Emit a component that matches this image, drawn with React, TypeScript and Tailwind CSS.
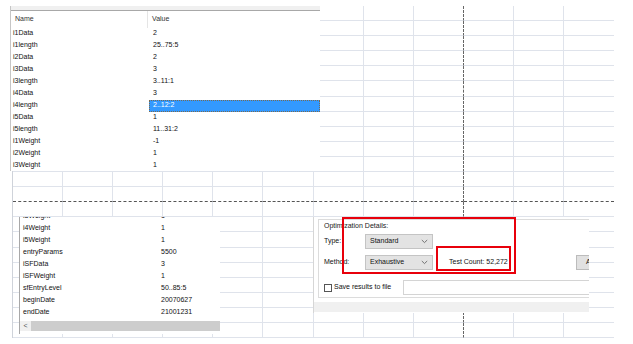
import React from 'react';

const topRows: [string, string][] = [
  ['i1Data', '2'],
  ['i1length', '25..75:5'],
  ['i2Data', '2'],
  ['i3Data', '3'],
  ['i3length', '3..11:1'],
  ['i4Data', '3'],
  ['i4length', '2..12:2'],
  ['i5Data', '1'],
  ['i5length', '11..31:2'],
  ['i1Weight', '-1'],
  ['i2Weight', '1'],
  ['i3Weight', '1'],
];

const bottomRows: [string, string][] = [
  ['i3Weight', '1'],
  ['i4Weight', '1'],
  ['i5Weight', '1'],
  ['entryParams', '5500'],
  ['iSFData', '3'],
  ['iSFWeight', '1'],
  ['sfEntryLevel', '50..85:5'],
  ['beginDate', '20070627'],
  ['endDate', '21001231'],
];

const Chevron = () => (
  <svg width="7" height="5" viewBox="0 0 7 5" className="shrink-0">
    <path d="M0.8 1 L3.5 3.6 L6.2 1" fill="none" stroke="#666" strokeWidth="0.9" />
  </svg>
);

const Select = ({ value }: { value: string }) => (
  <div className="w-[68px] h-[15px] bg-[#e3e3e3] border border-[#c4c4c4] flex items-center justify-between pl-[4px] pr-[4px]">
    <span>{value}</span>
    <Chevron />
  </div>
);

// spreadsheet grid behind the windows
const SheetGrid = () => {
  const cells = [];
  for (let r = 0; r < 22; r++) {
    for (let c = 0; c < 12; c++) {
      const breakRow = r === 12;
      const breakCol = c === 8;
      const last = c === 11;
      cells.push(
        <div
          key={`${r}-${c}`}
          className={[
            'h-[15.1px] border-b border-[#dfe3eb]',
            last ? '' : 'border-r',
            breakRow ? '[border-bottom-style:dashed] [border-bottom-color:#555]' : '',
            breakCol ? '[border-right-style:dashed] [border-right-color:#666]' : '',
          ].join(' ')}
        />
      );
    }
  }
  return (
    <div className="grid grid-cols-[repeat(12,50.1px)] border-l border-[#cfd3da]">{cells}</div>
  );
};

export default function App() {
  return (
    <div className="relative w-[633px] h-[344px] bg-white overflow-hidden text-[7px] text-[#111] font-['Liberation_Sans',Arial,sans-serif]">
      <div className="pl-[12px] pt-[6px]">
        <SheetGrid />
      </div>

      {/* property grid, top */}
      <div className="absolute left-[10px] top-[6px] w-[310px] h-[165px] bg-white border-l border-[#c6c6c6] overflow-hidden">
        <div className="h-[5px] bg-[#f0f0f0] border-b border-[#a8a8a8]" />
        <div className="h-[16.5px] flex items-center">
          <div className="w-[137px] h-full flex items-center pl-[4px] border-r border-[#e5e5e5] text-[#333]">Name</div>
          <div className="pl-[4px] text-[#333]">Value</div>
        </div>
        {topRows.map(([n, v]) => (
          <div key={n} className="h-[12px] flex items-center">
            <div className="w-[138px] pl-[2px]">{n}</div>
            {n === 'i4length' ? (
              <div className="flex-1 h-full flex items-center pl-[3px] bg-[#3399ff] text-white border border-dotted border-[#7a6a50]">{v}</div>
            ) : (
              <div className="flex-1 pl-[4px]">{v}</div>
            )}
          </div>
        ))}
      </div>

      {/* property grid, bottom */}
      <div className="absolute left-[19px] top-[217px] w-[201px] h-[117px] bg-white border-l border-[#a8a8a8] overflow-hidden">
        <div className="-mt-[7px]">
          {bottomRows.map(([n, v]) => (
            <div key={n} className="h-[12px] flex items-center">
              <div className="w-[138px] pl-[3px]">{n}</div>
              <div className="pl-[3px]">{v}</div>
            </div>
          ))}
        </div>
        <div className="mt-[3px] h-[10px] flex bg-[#f0f0f0]">
          <div className="w-[11px] flex items-center justify-center text-[#555] text-[7px]">&lt;</div>
          <div className="flex-1 bg-[#cdcdcd]" />
        </div>
      </div>

      {/* optimization panel */}
      <div className="absolute left-[313px] top-[217px] w-[276px] h-[96px] bg-white border-l border-[#d6d6d6] overflow-hidden flex flex-col">
        <div className="ml-[4px] mt-[2px] w-[290px] h-[79px] border border-[#dcdcdc] pl-[5px] pt-[1px] flex flex-col">
          <div className="h-[9px] leading-[9px] text-[#222]">Optimization Details:</div>
          <div className="mt-[4px] h-[15px] flex items-center">
            <div className="w-[41px]">Type:</div>
            <Select value="Standard" />
          </div>
          <div className="mt-[6px] h-[15px] flex items-center">
            <div className="w-[41px]">Method:</div>
            <Select value="Exhaustive" />
            <div className="ml-[16px] w-[127px]">Test Count: 52,272</div>
            <div className="w-[30px] h-[15px] bg-[#e1e1e1] border border-[#bcbcbc] pl-[9px] flex items-center">A</div>
          </div>
          <div className="mt-[10px] h-[15px] flex items-center">
            <div className="w-[8px] h-[8px] border border-[#555] bg-white" />
            <div className="ml-[2px] w-[69px]">Save results to file</div>
            <div className="flex-1 h-[15px] border border-[#d4d4d4] bg-white" />
          </div>
        </div>
        <div className="mt-[4px] h-[10px] bg-[#f0f0f0]" />
      </div>

      {/* annotation boxes */}
      <div className="absolute left-[342px] top-[217px] w-[174px] h-[57px] border-2 border-[#e8000b]" />
      <div className="absolute left-[436px] top-[246px] w-[75px] h-[25px] border-2 border-[#e8000b]" />
    </div>
  );
}
